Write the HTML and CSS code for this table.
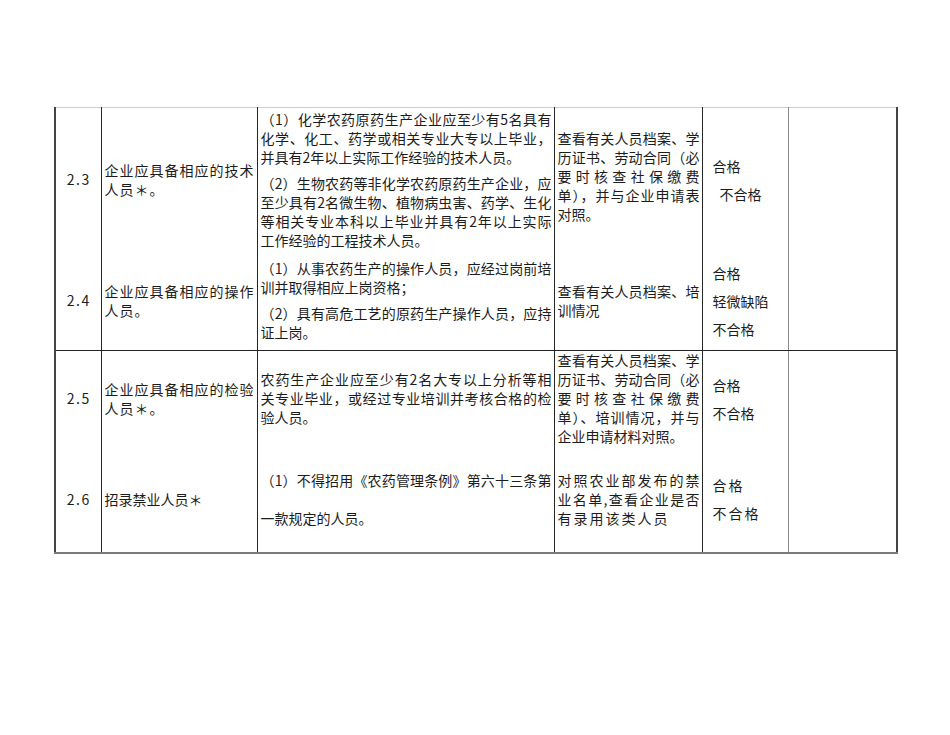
FILE: index.html
```html
<!DOCTYPE html>
<html lang="zh-CN">
<head>
<meta charset="utf-8">
<title>人员检查表</title>
<link rel="stylesheet" href="styles.css">
</head>
<body>
<div class="page">
<table class="sheet">
<colgroup>
<col class="c1"><col class="c2"><col class="c3"><col class="c4"><col class="c5"><col class="c6">
</colgroup>
<tbody>
<tr class="r23">
<td class="num">2.3</td>
<td class="item"><span class="ln">企业应具备相应的技术</span><span class="ln">人员＊。</span></td>
<td class="req">
<div class="para"><span class="ln j">（1）化学农药原药生产企业应至少有5名具有</span><span class="ln j">化学、化工、药学或相关专业大专以上毕业，</span><span class="ln">并具有2年以上实际工作经验的技术人员。</span></div>
<div class="para gap"><span class="ln j">（2）生物农药等非化学农药原药生产企业，应</span><span class="ln j">至少具有2名微生物、植物病虫害、药学、生化</span><span class="ln j">等相关专业本科以上毕业并具有2年以上实际</span><span class="ln">工作经验的工程技术人员。</span></div>
</td>
<td class="way up"><span class="ln j">查看有关人员档案、学</span><span class="ln j">历证书、劳动合同（必</span><span class="ln j">要时核查社保缴费</span><span class="ln j">单），并与企业申请表</span><span class="ln">对照。</span></td>
<td class="res"><span class="opt">合格</span><span class="opt ind">不合格</span></td>
<td class="note"></td>
</tr>
<tr class="r24">
<td class="num">2.4</td>
<td class="item"><span class="ln">企业应具备相应的操作</span><span class="ln">人员。</span></td>
<td class="req">
<div class="para"><span class="ln j">（1）从事农药生产的操作人员，应经过岗前培</span><span class="ln">训并取得相应上岗资格；</span></div>
<div class="para gap"><span class="ln j">（2）具有高危工艺的原药生产操作人员，应持</span><span class="ln">证上岗。</span></div>
</td>
<td class="way"><span class="ln j">查看有关人员档案、培</span><span class="ln">训情况</span></td>
<td class="res"><span class="opt">合格</span><span class="opt">轻微缺陷</span><span class="opt">不合格</span></td>
<td class="note"></td>
</tr>
<tr class="r25">
<td class="num">2.5</td>
<td class="item"><span class="ln">企业应具备相应的检验</span><span class="ln">人员＊。</span></td>
<td class="req">
<div class="para"><span class="ln j">农药生产企业应至少有2名大专以上分析等相</span><span class="ln j">关专业毕业，或经过专业培训并考核合格的检</span><span class="ln">验人员。</span></div>
</td>
<td class="way"><span class="ln j">查看有关人员档案、学</span><span class="ln j">历证书、劳动合同（必</span><span class="ln j">要时核查社保缴费</span><span class="ln j">单）、培训情况，并与</span><span class="ln">企业申请材料对照。</span></td>
<td class="res"><span class="opt">合格</span><span class="opt">不合格</span></td>
<td class="note"></td>
</tr>
<tr class="r26">
<td class="num">2.6</td>
<td class="item plain"><span class="ln">招录禁业人员＊</span></td>
<td class="req">
<div class="para"><span class="ln j">（1）不得招用《农药管理条例》第六十三条第</span><span class="ln blank"></span><span class="ln">一款规定的人员。</span></div>
</td>
<td class="way"><span class="ln j">对照农业部发布的禁</span><span class="ln j">业名单,查看企业是否</span><span class="ln wide">有录用该类人员</span></td>
<td class="res"><span class="opt wide">合格</span><span class="opt wide">不合格</span></td>
<td class="note"></td>
</tr>
</tbody>
</table>
</div>
</body>
</html>
```

FILE: styles.css
```css
body {
  margin: 0;
  background: #ffffff;
  font-family: "Noto Sans CJK SC", "Noto Sans", sans-serif;
  font-size: 14px;
  color: #1c1c1c;
}

.page {
  padding: 107px 0 0 54px;
}

.sheet {
  border-collapse: collapse;
  table-layout: fixed;
  width: 842px;
  border-top: 1px solid #cfcfcf;
  border-bottom: 2px solid #7a7a7a;
  border-left: 2px solid #444444;
  border-right: 2px solid #444444;
}

.c1 { width: 46px; }
.c2 { width: 156px; }
.c3 { width: 297px; }
.c4 { width: 148px; }
.c5 { width: 86px; }
.c6 { width: 109px; }

.sheet td {
  padding: 0 2px 3px 3px;
  vertical-align: middle;
  border-left: 1px solid #262626;
  border-right: 1px solid #262626;
  line-height: 19px;
}

.sheet td.note {
  border-left: 1px solid #8a8a8a;
}

.sheet td.res {
  border-right: 1px solid #8a8a8a;
}

.r23 { height: 147px; }
.r24 { height: 96px; }
.r25 { height: 94px; }
.r26 { height: 104px; }

.r24 td {
  border-bottom: 1px solid #222222;
}

.num {
  text-align: center;
  letter-spacing: 1.5px;
}

.item {
  letter-spacing: 1px;
  padding-left: 4px;
}

.item.plain {
  letter-spacing: 0;
}

.ln {
  display: block;
  white-space: nowrap;
}

.j {
  text-align: justify;
  text-align-last: justify;
}

.blank {
  height: 19px;
}

.gap {
  margin-top: 7px;
}

.way {
  padding-left: 2px;
}

.way.up {
  padding-bottom: 10px;
}

.wide {
  letter-spacing: 2px;
}

.sheet td.res {
  padding-left: 10px;
}

.opt {
  display: block;
  line-height: 28px;
}

.opt.ind {
  padding-left: 7px;
}
```
